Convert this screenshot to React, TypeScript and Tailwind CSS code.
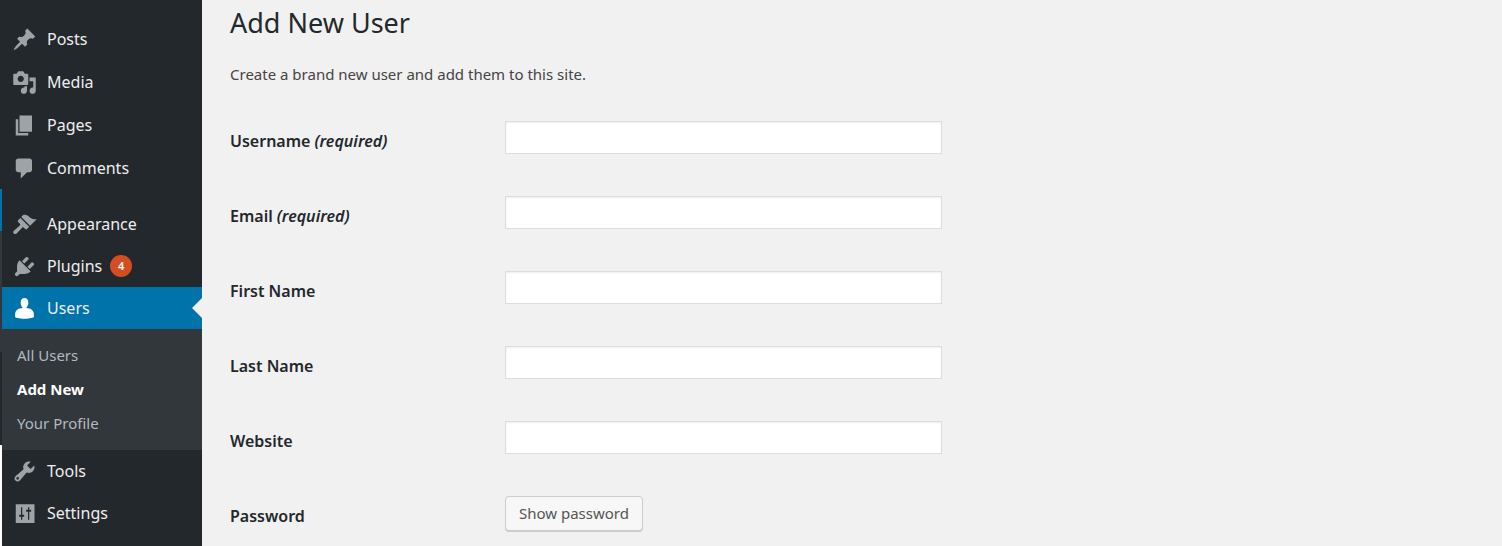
import { useState } from "react";

interface MenuIconProps {
  path: string;
}

interface MenuItemProps {
  label: string;
  path: string;
  badge?: number;
  current?: boolean;
}

interface Field {
  id: string;
  label: string;
  type: string;
  required?: boolean;
}

const icons = {
  posts:
    "M10.44 3.02l1.82-1.82 6.36 6.35-1.83 1.82c-1.05-.68-2.48-.57-3.41.36l-.75.75c-.92.93-1.04 2.35-.35 3.41l-1.83 1.82-2.41-2.41-2.8 2.79c-.42.42-3.38 2.71-3.8 2.29s1.86-3.39 2.28-3.81l2.79-2.79L4.1 9.36l1.83-1.82c1.05.69 2.48.57 3.4-.36l.75-.75c.93-.92 1.05-2.35.36-3.41z",
  media:
    "M13 11V4c0-.55-.45-1-1-1h-1.67L9 1H5L3.67 3H2c-.55 0-1 .45-1 1v7c0 .55.45 1 1 1h10c.55 0 1-.45 1-1zM7 4.5c1.38 0 2.5 1.12 2.5 2.5S8.38 9.5 7 9.5 4.5 8.38 4.5 7 5.62 4.5 7 4.5zM14 6h5v10.5c0 1.38-1.12 2.5-2.5 2.5S14 17.88 14 16.5s1.12-2.5 2.5-2.5c.17 0 .34.02.5.05V9h-3V6zm-4 8.05V13h2v3.5c0 1.38-1.12 2.5-2.5 2.5S7 17.88 7 16.5 8.12 14 9.5 14c.17 0 .34.02.5.05z",
  pages: "M6 15V2h10v13H6zm-1 1h8v2H3V5h2v11z",
  comments:
    "M5 2h9c1.1 0 2 .9 2 2v7c0 1.1-.9 2-2 2h-2l-5 5v-5H5c-1.1 0-2-.9-2-2V4c0-1.1.9-2 2-2z",
  appearance:
    "M14.48 11.06L7.41 3.99l1.5-1.5c.5-.56 2.3-.47 3.51.32 1.21.8 1.43 1.28 2.91 2.1 1.18.64 2.45 1.26 4.45.85zM13.77 11.77L6.7 4.7 4.9 6.5c-.4.4-.4 1 0 1.4l1.4 1.4c.4.4.4 1 0 1.4l-4.8 4.2c-.7.7-.7 1.7-.1 2.3.6.6 1.6.6 2.3-.1l4.4-4.6c.4-.4 1-.4 1.4 0l1.1 1.1c.4.4 1 .4 1.4 0z",
  plugins:
    "M13.11 4.36L9.87 7.6 8 5.73l3.24-3.24c.35-.34 1.05-.2 1.56.32.52.51.66 1.21.31 1.55zm-8 1.77l.91-1.12 9.01 9.01-1.19.84c-.71.71-2.63 1.16-3.82 1.16H6.14L4.9 17.26c-.59.59-1.54.59-2.12 0-.59-.58-.59-1.53 0-2.12l1.24-1.24v-3.88c0-1.13.4-3.19 1.09-3.89zm7.26 3.97l3.24-3.24c.34-.35 1.04-.21 1.55.31.52.51.66 1.21.31 1.55l-3.24 3.25z",
  users:
    "M10 1.6c1.9 0 3.1 1.6 3.1 3.7 0 1.9-.9 3.4-1.7 4 .4.3.9.4 1.5.4 2.7.2 4.6 2.3 4.6 4.8V17s-3 1.2-7.5 1.2S2.5 17 2.5 17v-2.5c0-2.5 1.9-4.6 4.6-4.8.6 0 1.1-.1 1.5-.4-.8-.6-1.7-2.1-1.7-4 0-2.1 1.2-3.7 3.1-3.7z",
  tools:
    "M16.68 9.77c-1.34 1.34-3.3 1.67-4.95.99l-5.41 6.52c-.99.99-2.59.99-3.58 0s-.99-2.59 0-3.57l6.52-5.42c-.68-1.65-.35-3.61.99-4.95 1.28-1.28 3.12-1.62 4.72-1.06l-2.89 2.89 2.82 2.82 2.86-2.87c.53 1.58.18 3.39-1.08 4.65zM3.81 16.21c.4.39 1.04.39 1.43 0 .4-.4.4-1.04 0-1.43-.39-.4-1.03-.4-1.43 0-.39.39-.39 1.03 0 1.43z",
  settings:
    "M3 2.5h15v15H3zM7.2 5v6H5.7v1.5h1.5V15h1v-2.5h1.5V11H8.2V5zM12.8 5v2h-1.5v1.5h1.5V15h1V8.5h1.5V7h-1.5V5z"
};

const fields: Field[] = [
  { id: "user_login", label: "Username", type: "text", required: true },
  { id: "email", label: "Email", type: "email", required: true },
  { id: "first_name", label: "First Name", type: "text" },
  { id: "last_name", label: "Last Name", type: "text" },
  { id: "url", label: "Website", type: "url" }
];

const submenu = ["All Users", "Add New", "Your Profile"];

function MenuIcon({ path }: MenuIconProps) {
  return (
    <svg viewBox="0 0 20 20" className="w-[25px] h-[25px] shrink-0 fill-current" aria-hidden="true">
      <path d={path} fillRule="evenodd" />
    </svg>
  );
}

function MenuItem({ label, path, badge, current }: MenuItemProps) {
  return (
    <li>
      <a
        href="#"
        className={
          current
            ? "relative flex items-center h-[42px] pl-2.5 gap-2.5 bg-[#0073aa] text-white"
            : "flex items-center h-[42px] pl-2.5 gap-2.5 text-[#9ea3a8] hover:text-[#00b9eb]"
        }
      >
        <MenuIcon path={path} />
        <span className="text-[16px] text-[#eeeeee]">{label}</span>
        {badge && (
          <span className="flex items-center justify-center w-[22px] h-[22px] -ml-0.5 rounded-full bg-[#d54e21] text-white text-[11px] font-semibold">
            {badge}
          </span>
        )}
        {current && (
          <span className="absolute right-0 top-1/2 -translate-y-1/2 border-y-10 border-r-10 border-y-transparent border-r-[#f1f1f1]" />
        )}
      </a>
    </li>
  );
}

function Sidebar() {
  return (
    <nav className="w-[200px] shrink-0 bg-[#23282d] pt-[18px]">
      <ul className="flex flex-col gap-px">
        <MenuItem label="Posts" path={icons.posts} />
        <MenuItem label="Media" path={icons.media} />
        <MenuItem label="Pages" path={icons.pages} />
        <MenuItem label="Comments" path={icons.comments} />
      </ul>
      <ul className="mt-3.5">
        <MenuItem label="Appearance" path={icons.appearance} />
        <MenuItem label="Plugins" path={icons.plugins} badge={4} />
        <MenuItem label="Users" path={icons.users} current />
        <li>
          <ul className="bg-[#32373c] pt-[9px] pb-2.5">
            {submenu.map((item) => (
              <li key={item}>
                <a
                  href="#"
                  className={
                    item === "Add New"
                      ? "flex items-center h-[34px] pl-[15px] text-[15px] font-bold text-white"
                      : "flex items-center h-[34px] pl-[15px] text-[15px] text-[#b4b9be] hover:text-[#00b9eb]"
                  }
                >
                  {item}
                </a>
              </li>
            ))}
          </ul>
        </li>
        <MenuItem label="Tools" path={icons.tools} />
        <MenuItem label="Settings" path={icons.settings} />
      </ul>
    </nav>
  );
}

export default function App() {
  const [values, setValues] = useState<Record<string, string>>({});
  const [showPassword, setShowPassword] = useState(false);

  const handleChange = (id: string, value: string) => {
    setValues({ ...values, [id]: value });
  };

  return (
    <div className="flex min-h-screen bg-[#f1f1f1] font-['Noto_Sans','Open_Sans',sans-serif]">
      {/* edge strip left of the menu */}
      <div className="flex flex-col w-0.5 shrink-0 bg-white">
        <div className="h-[189px] bg-[#23282d]" />
        <div className="h-[42px] bg-[#0073aa]" />
        <div className="h-[121px] bg-[#32373c]" />
        <div className="h-[93px] bg-[#23282d]" />
      </div>
      <Sidebar />

      <main className="flex-1 min-w-0 pl-7 pr-5">
        <h1 className="pt-[5px] text-[27px] leading-9 text-[#23282d]">Add New User</h1>
        <p className="mt-[23px] text-[15px] leading-5 text-[#444444]">
          Create a brand new user and add them to this site.
        </p>

        <form className="mt-[19px]" onSubmit={(e) => e.preventDefault()}>
          {fields.map((field) => (
            <div key={field.id} className="flex h-[75px] pt-[18px]">
              <label
                htmlFor={field.id}
                className="w-[275px] shrink-0 pt-2 text-[16px] leading-6 font-semibold text-[#23282d]"
              >
                {field.label}
                {field.required && <em className="ml-1">(required)</em>}
              </label>
              <input
                id={field.id}
                type={field.type}
                value={values[field.id] || ""}
                onChange={(e) => handleChange(field.id, e.target.value)}
                className="w-full max-w-[437px] h-[33px] px-2 bg-white border border-[#dddddd] text-[#32373c] shadow-[inset_0_1px_2px_rgba(0,0,0,0.07)] outline-none focus:border-[#5b9dd9]"
              />
            </div>
          ))}
          <div className="flex pt-[18px]">
            <label
              htmlFor="password"
              className="w-[275px] shrink-0 pt-2 text-[16px] leading-6 font-semibold text-[#23282d]"
            >
              Password
            </label>
            {showPassword ? (
              <input
                id="password"
                type="text"
                className="w-full max-w-[437px] h-[33px] px-2 bg-white border border-[#dddddd]"
              />
            ) : (
              <button
                id="password"
                type="button"
                onClick={() => setShowPassword(true)}
                className="h-[35px] px-[13px] rounded border border-[#cccccc] bg-[#f7f7f7] text-[15px] text-[#555555] shadow-[0_1px_0_#cccccc]"
              >
                Show password
              </button>
            )}
          </div>
        </form>
      </main>
    </div>
  );
}
